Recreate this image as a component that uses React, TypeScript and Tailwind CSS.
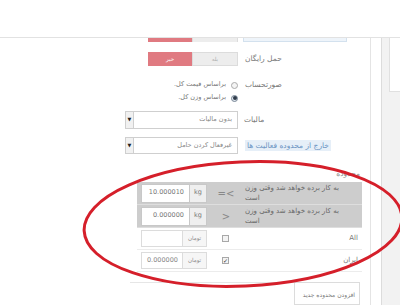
const rangeRows = [
  { value: "10.000010", op: "=<" },
  { value: "0.000000", op: ">" },
];

const zoneRows = [
  { name: "All", value: "", checked: false },
  { name: "ایران", value: "0.000000", checked: true },
];

function Select({ text }: { text: string }) {
  return (
    <div className="flex h-full w-[113px] border border-[#cfcfcf] bg-white">
      <div className="flex w-[8px] items-center justify-center border-r border-[#cfcfcf] bg-[#f1f1f1] text-[5px] text-[#222]">
        ▼
      </div>
      <div dir="rtl" className="flex flex-1 items-center pr-[5px] text-[6.5px] text-[#888]">
        {text}
      </div>
    </div>
  );
}

export default function App() {
  return (
    <div className="relative h-[305px] w-[400px] overflow-hidden bg-white font-['DejaVu_Sans',sans-serif] text-[7px] text-[#777]">
      {/* header */}
      <div className="h-[38px] border-b border-[#e2e2e2]" />

      <div className="flex h-[267px]">
        <main className="flex w-[371px] flex-col border-r border-[#e4e4e4]">
          {/* row cut off by the header */}
          <div className="flex h-[4px]">
            <div className="w-[148px]" />
            <div className="w-[44px] bg-[#e07a81]" />
            <div className="w-[46px] border-x border-[#dcdcdc] bg-[#ededed]" />
            <div className="ml-[5px] w-[104px] border-x border-b border-[#d3e1ee] bg-[#eef4fa]" />
          </div>

          {/* free shipping */}
          <div className="mt-[10px] flex h-[14px] items-center">
            <div className="flex w-[238px] justify-end">
              <div className="flex h-[14px] w-[90px] text-[5.5px]">
                <div className="flex w-[44px] items-center justify-center bg-[#e07a81] text-white">خیر</div>
                <div className="flex flex-1 items-center justify-center border border-[#dcdcdc] bg-[#ededed] text-[#aaa]">بله</div>
              </div>
            </div>
            <div dir="rtl" className="ml-[7px] text-left text-[7.5px] text-[#777]">حمل رایگان</div>
          </div>

          {/* billing */}
          <div className="mt-[14px] flex">
            <div className="flex w-[238px] flex-col items-end gap-[3px] text-[6.5px]">
              <div className="flex h-[10px] items-center gap-[5px]">
                <span dir="rtl">براساس قیمت کل.</span>
                <span className="h-[7px] w-[7px] rounded-full border border-[#aaa] bg-[#f4f4f4]" />
              </div>
              <div className="flex h-[10px] items-center gap-[5px]">
                <span dir="rtl">براساس وزن کل.</span>
                <span className="flex h-[7px] w-[7px] items-center justify-center rounded-full border border-[#7a8796] bg-[#dfe6ee]">
                  <span className="h-[4px] w-[4px] rounded-full bg-[#2f3b4a]" />
                </span>
              </div>
            </div>
            <div dir="rtl" className="ml-[7px] h-[10px] text-left text-[7.5px] leading-[10px]">صورتحساب</div>
          </div>

          {/* tax */}
          <div className="mt-[8px] flex h-[18px] items-center">
            <div className="flex h-full w-[238px] justify-end">
              <Select text="بدون مالیات" />
            </div>
            <div dir="rtl" className="ml-[6px] text-left text-[7.5px]">مالیات</div>
          </div>

          {/* out of range */}
          <div className="mt-[8px] flex h-[17px] items-center">
            <div className="flex h-full w-[238px] justify-end">
              <Select text="غیرفعال کردن حامل" />
            </div>
            <div dir="rtl" className="ml-[7px] bg-[#e6eff8] px-[2px] text-left text-[7.5px] leading-[11px] text-[#6a93c2]">
              خارج از محدوده فعالیت ها
            </div>
          </div>

          {/* ranges */}
          <div dir="rtl" className="mt-[15px] pr-[10px] text-[7.5px] leading-[9px] text-[#888]">محدوده</div>

          <div className="ml-[137px] mt-[4px] w-[225px]">
            {rangeRows.map((r) => (
              <div key={r.op} className="flex h-[23px] items-center border-b border-[#dedede] bg-[#cdcdcd] pl-[4px]">
                <div className="flex h-[19px]">
                  <div className="flex w-[49px] items-center justify-end border border-[#c8c8c8] bg-white pr-[5px] text-[6.5px] text-[#777]">
                    {r.value}
                  </div>
                  <div className="flex w-[17px] items-center justify-center border-y border-r border-[#c8c8c8] bg-[#efefef] text-[6.5px] text-[#777]">
                    kg
                  </div>
                </div>
                <div className="ml-[8px] w-[22px] text-center text-[10px] leading-[11px] text-[#888]">{r.op}</div>
                <div dir="rtl" className="ml-[8px] whitespace-nowrap text-left text-[7px] leading-[10px] text-[#666]">
                  به کار برده خواهد شد وقتی وزن
                  <br />
                  است
                </div>
              </div>
            ))}

            {zoneRows.map((z) => (
              <div key={z.name} className="flex h-[22px] items-center border-b border-[#ececec] pl-[4px] pr-[4px]">
                <div className="flex h-[17px]">
                  <div className="flex w-[42px] items-center justify-end border border-[#dcdcdc] bg-white pr-[4px] text-[6.5px] text-[#888]">
                    {z.value}
                  </div>
                  <div className="flex w-[24px] items-center justify-center border-y border-r border-[#dcdcdc] bg-[#f6f6f6] text-[5.5px] text-[#888]">
                    تومان
                  </div>
                </div>
                <div className="ml-[15px] flex h-[7px] w-[7px] items-center justify-center border border-[#a8a8a8] bg-[#f3f3f3] text-[6px] leading-[6px] text-[#333]">
                  {z.checked ? "✓" : ""}
                </div>
                <div dir="rtl" className="ml-auto text-[7px] text-[#777]">{z.name}</div>
              </div>
            ))}
          </div>

          {/* add new range */}
          <div className="ml-[130px] mr-[10px] mt-[10px] flex flex-1">
            <div className="flex-1 border-t border-[#e6e6e6]" />
            <div dir="rtl" className="w-[66px] whitespace-nowrap border border-[#dcdcdc] pr-[4px] pt-[7px] text-[6px] text-[#777]">
              افزودن محدوده جدید
            </div>
          </div>
        </main>

        <div className="w-[10px]" />
        <div className="flex-1 border-l border-[#dcdcdc] bg-[#f2f2f2] pl-[7px]">
          <div className="h-[54px] border-b border-l border-[#e0e0e0] bg-white" />
        </div>
      </div>

      {/* red marker ellipse */}
      <svg className="pointer-events-none absolute inset-0" width="400" height="305" viewBox="0 0 400 305">
        <ellipse cx="243" cy="224" rx="159" ry="62" fill="none" stroke="#d51f2a" strokeWidth="3" transform="rotate(-2.5 243 224)" />
      </svg>
    </div>
  );
}
